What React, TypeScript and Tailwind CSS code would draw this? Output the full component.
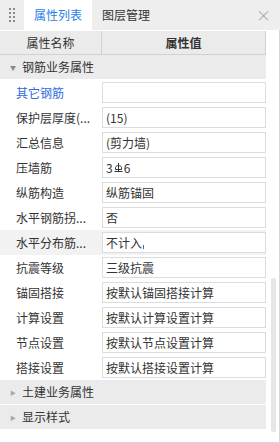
import React from "react";

const rows = [
    { label: "其它钢筋", value: "", blue: true },
    { label: "保护层厚度(...", value: "(15)" },
    { label: "汇总信息", value: "(剪力墙)" },
    { label: "压墙筋", value: "steel" },
    { label: "纵筋构造", value: "纵筋锚固" },
    { label: "水平钢筋拐...", value: "否" },
    { label: "水平分布筋...", value: "不计入", active: true },
    { label: "抗震等级", value: "三级抗震" },
    { label: "锚固搭接", value: "按默认锚固搭接计算" },
    { label: "计算设置", value: "按默认计算设置计算" },
    { label: "节点设置", value: "按默认节点设置计算" },
    { label: "搭接设置", value: "按默认搭接设置计算" },
];

function SteelMark() {
    // grade III rebar symbol
    return (
        <svg width="9" height="12" viewBox="0 0 9 12" className="mx-[1px]">
            <line x1="4.5" y1="1" x2="4.5" y2="9" stroke="#333" strokeWidth="1" />
            <path d="M1.5 7.5 V5.5 C1.5 3 7.5 3 7.5 5.5 V7.5 Z" fill="none" stroke="#333" strokeWidth="1" />
            <line x1="0.5" y1="9.5" x2="8.5" y2="9.5" stroke="#333" strokeWidth="1" />
        </svg>
    );
}

function Grip() {
    return (
        <div className="grid grid-cols-2 gap-x-[2px] gap-y-[2px]">
            {[0, 1, 2, 3, 4, 5, 6, 7].map(i => (
                <span key={i} className="block w-[2px] h-[2px] bg-[#8a8a8a]" />
            ))}
        </div>
    );
}

export default function App() {
    return (
        <div
            className="w-[280px] h-[443px] bg-white text-[12px] text-[#333] flex flex-col overflow-hidden"
            style={{ fontFamily: '"Noto Sans CJK SC", "Noto Sans", sans-serif' }}
        >
            {/* tabs */}
            <div className="h-[30px] bg-[#eeeeee] flex items-stretch shrink-0">
                <div className="w-[24px] flex items-center justify-center">
                    <Grip />
                </div>
                <div className="w-[68px] bg-white flex items-center justify-center text-[#1f7fe8]">
                    属性列表
                </div>
                <div className="ml-[10px] flex items-center">图层管理</div>
                <div className="ml-auto mr-[9px] flex items-center text-[#9a9a9a] text-[15px] font-light">
                    ×
                </div>
            </div>

            {/* body */}
            <div className="flex-1 flex border-r border-b border-[#d8d8d8]">
                <div className="w-[266px] flex flex-col">
                    <div className="mt-[1px] h-[24px] flex">
                        <div className="w-[102px] bg-[#ebebeb] border-r border-b border-[#d2d2d2] flex items-center justify-center">
                            属性名称
                        </div>
                        <div className="flex-1 bg-[#ebebeb] border-r border-b border-[#d2d2d2] flex items-center justify-center font-semibold">
                            属性值
                        </div>
                    </div>

                    <div className="h-[24px] bg-[#ebebeb] flex items-center">
                        <span className="w-[22px] pl-[10px] text-[6px] text-[#888]">▼</span>
                        <span className="text-[12px]">钢筋业务属性</span>
                    </div>

                    <div className="h-[1px]" />

                    {rows.map(r => (
                        <div key={r.label} className={"h-[25px] flex items-center " + (r.active ? "bg-[#f2f2f2]" : "")}>
                            <div className={"w-[102px] pl-[16px] whitespace-nowrap overflow-hidden " + (r.blue ? "text-[#2e6bd9]" : "")}>
                                {r.label}
                            </div>
                            <div className="flex-1 h-[21px] bg-white border border-[#dcdcdc] pl-[3px] flex items-center whitespace-nowrap">
                                {r.value === "steel" ? (
                                    <>
                                        <span>3</span>
                                        <SteelMark />
                                        <span>6</span>
                                    </>
                                ) : (
                                    r.value
                                )}
                                {r.active && <span className="ml-[1px] mt-[8px] w-[1px] h-[4px] bg-[#2e6bd9]" />}
                            </div>
                        </div>
                    ))}

                    <div className="h-[24px] bg-[#ebebeb] flex items-center">
                        <span className="w-[22px] pl-[10px] text-[6px] text-[#aaa]">▶</span>
                        <span>土建业务属性</span>
                    </div>
                    <div className="mt-[1px] h-[24px] bg-[#ebebeb] flex items-center">
                        <span className="w-[22px] pl-[10px] text-[6px] text-[#aaa]">▶</span>
                        <span>显示样式</span>
                    </div>
                </div>

                {/* scrollbar */}
                <div className="flex-1 pt-[248px] pl-[5px]">
                    <div className="w-[5px] h-[154px] bg-[#e6e6e6] rounded-[2px]" />
                </div>
            </div>
        </div>
    );
}
